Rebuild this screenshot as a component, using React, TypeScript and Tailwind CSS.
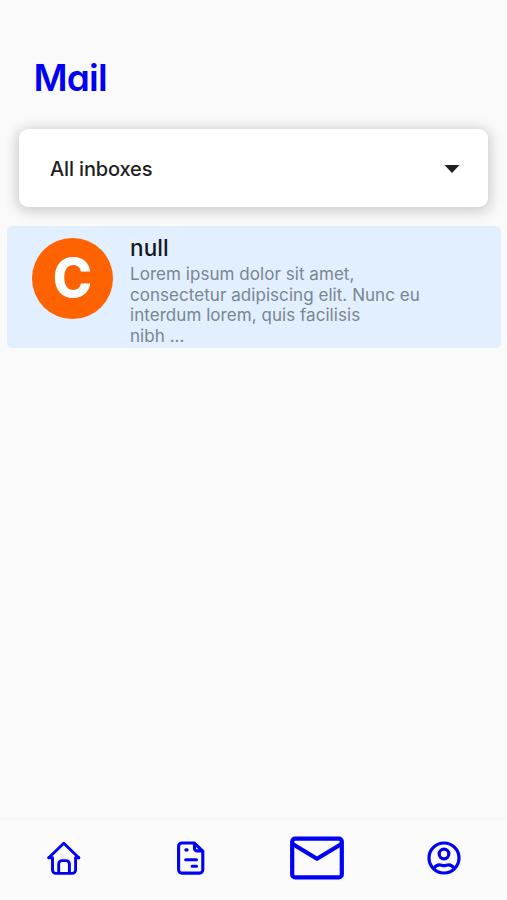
import React, { useState } from "react";

interface MailItem {
  id: number;
  sender: string;
  initial: string;
  preview: string[];
}

const MAILS: MailItem[] = [
  {
    id: 1,
    sender: "null",
    initial: "C",
    preview: [
      "Lorem ipsum dolor sit amet,",
      "consectetur adipiscing elit. Nunc eu",
      "interdum lorem, quis facilisis",
      "nibh ...",
    ],
  },
];

const iconProps = {
  fill: "none",
  stroke: "currentColor",
  strokeLinecap: "round" as const,
  strokeLinejoin: "round" as const,
};

function HomeIcon() {
  return (
    <svg width="36" height="36" viewBox="-0.8 -0.5 36 36" strokeWidth="2.9" {...iconProps}>
      <path d="M3 17.2 18 2.8l15 14.4" />
      <path d="M3 17.2h3.7v12.3a3.4 3.4 0 0 0 3.4 3.4h16.3a3.4 3.4 0 0 0 3.4-3.4V17.2H33" />
      <path d="M12.9 32.5v-9a3.4 3.4 0 0 1 3.4-3.4h3.9a3.4 3.4 0 0 1 3.4 3.4v9" />
    </svg>
  );
}

function DocumentIcon() {
  return (
    <svg width="36" height="36" viewBox="-0.3 -0.2 36 36" strokeWidth="3.1" {...iconProps}>
      <path d="M21.8 2.8H9.6a3.3 3.3 0 0 0-3.3 3.3v23.5a3.3 3.3 0 0 0 3.3 3.3h17.6a3.3 3.3 0 0 0 3.3-3.3V11z" />
      <path d="M22.2 3.2v5a2.5 2.5 0 0 0 2.5 2.5h5.2" />
      <path d="M13.6 9.7h1.2M13.4 19.6h10.8M19.9 26.1h4.3" />
    </svg>
  );
}

function MailIcon() {
  return (
    <svg width="56" height="46" viewBox="0 0 56 46" strokeWidth="4.2" {...iconProps}>
      <rect x="3.2" y="3.6" width="49.6" height="38.8" rx="3" />
      <path d="m3.6 9 24.4 14.7L52.4 9" strokeLinecap="butt" />
    </svg>
  );
}

function ProfileIcon() {
  return (
    <svg width="36" height="36" viewBox="0 0 36 36" strokeWidth="3.2" {...iconProps}>
      <circle cx="18" cy="18" r="15" />
      <circle cx="18" cy="14" r="4.8" />
      <path d="M8 28.4c1.2-2.6 3.2-3.6 5.6-3.6 1.8 0 2.3.8 4.4.8s2.6-.8 4.4-.8c2.4 0 4.4 1 5.6 3.6" />
    </svg>
  );
}

const TABS = [
  { name: "home", icon: <HomeIcon /> },
  { name: "documents", icon: <DocumentIcon /> },
  { name: "mail", icon: <MailIcon /> },
  { name: "profile", icon: <ProfileIcon /> },
];

export default function App() {
  const [activeTab, setActiveTab] = useState("mail");

  return (
    <div className="flex h-screen w-full flex-col overflow-hidden bg-[#fafafa] font-['Inter',sans-serif]">
      <h1 className="mt-[50px] ml-[33.5px] h-[56px] text-[37px] leading-[56px] font-semibold tracking-[-0.8px] text-[#0000f5] [font-feature-settings:'cv11']">
        Mail
      </h1>

      {/* Inbox selector */}
      <button className="mx-[19px] mt-[23px] flex h-[78px] shrink-0 items-center justify-between rounded-[9px] bg-white pr-7 pl-[31px] shadow-[0_2px_14px_2px_rgba(0,0,0,0.2)]">
        <span className="pt-0.5 text-[20px] font-medium tracking-[-0.15px] text-[#1f1f1f]">All inboxes</span>
        <svg width="16" height="8" viewBox="0 0 16 8" className="mt-px" fill="#1f1f1f">
          <path d="M.5 0h15L8 8z" />
        </svg>
      </button>

      {/* Mail list */}
      <main className="mt-[19px] mr-1.5 ml-[7px] flex-1">
        {MAILS.map((mail) => (
          <article key={mail.id} className="flex h-[122px] rounded-[5px] bg-[#e1efff] pl-[25px]">
            <div className="mt-3 flex size-[81px] items-center justify-center rounded-full bg-[#ff6200] text-[53px] leading-none font-extrabold text-white">
              {mail.initial}
            </div>
            <div className="mt-[7px] ml-[17px]">
              <h2 className="pb-0.5 text-[22.5px] leading-[29px] font-medium tracking-[0.1px] text-[#15191f]">{mail.sender}</h2>
              <p className="text-[17px] leading-[20.7px] tracking-[0.05px] text-[#7b8590]">
                {mail.preview.map((line) => (
                  <span key={line} className="block whitespace-nowrap">{line}</span>
                ))}
              </p>
            </div>
          </article>
        ))}
      </main>

      <nav className="flex h-20 bg-[#fbfbfb] pb-[5px] text-[#0000f5] shadow-[0_-1px_5px_rgba(0,0,0,0.04)]">
        {TABS.map((tab) => (
          <button
            key={tab.name}
            aria-label={tab.name}
            aria-current={activeTab === tab.name ? "page" : undefined}
            onClick={() => setActiveTab(tab.name)}
            className="flex flex-1 items-center justify-center"
          >
            {tab.icon}
          </button>
        ))}
      </nav>
    </div>
  );
}
